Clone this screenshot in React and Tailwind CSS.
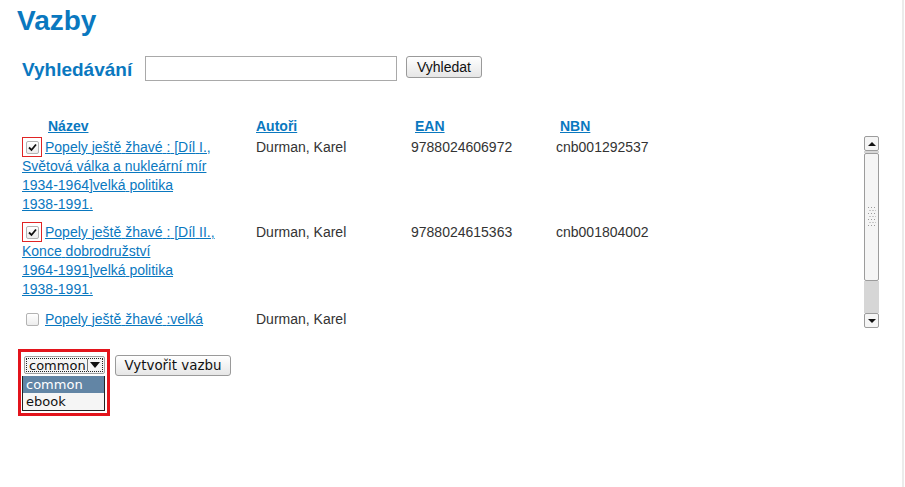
import React from 'react';

const books = [
  {
    id: 1,
    title: 'Popely ještě žhavé : [Díl I., Světová válka a nukleární mír 1934-1964]velká politika 1938-1991.',
    author: 'Durman, Karel',
    ean: '9788024606972',
    nbn: 'cnb001292537',
    checked: true,
  },
  {
    id: 2,
    title: 'Popely ještě žhavé : [Díl II., Konce dobrodružství 1964-1991]velká politika 1938-1991.',
    author: 'Durman, Karel',
    ean: '9788024615363',
    nbn: 'cnb001804002',
    checked: true,
  },
  {
    id: 3,
    title: 'Popely ještě žhavé :velká politika 1938-1991.',
    author: 'Durman, Karel',
    ean: '',
    nbn: '',
    checked: false,
  },
];

const Title = ({ text }) => (
  <>
    {text.split(' ').map((w, i) => (
      <React.Fragment key={i}>
        {i > 0 && ' '}
        {w.includes('-') ? <span className="whitespace-nowrap">{w}</span> : w}
      </React.Fragment>
    ))}
  </>
);

const CheckBox = ({ checked }) => (
  <span className="w-[13px] h-[13px] border border-[#b3b3b3] rounded-[2px] bg-gradient-to-b from-white to-[#ededed] flex items-center justify-center">
    {checked && (
      <svg width="11" height="11" viewBox="0 0 11 11">
        <path d="M2 5.5 L4.5 8 L9 2.5" fill="none" stroke="#111" strokeWidth="1.8" />
      </svg>
    )}
  </span>
);

const Arrow = ({ up }) => (
  <span
    className={
      up
        ? 'w-0 h-0 border-x-[4px] border-x-transparent border-b-[4px] border-b-[#111]'
        : 'w-0 h-0 border-x-[4px] border-x-transparent border-t-[4px] border-t-[#111]'
    }
  />
);

const ScrollBar = () => (
  <div className="w-[15px] flex flex-col">
    <div className="h-[15px] border border-[#9c9c9c] rounded-[2px] bg-[#f5f5f5] flex items-center justify-center">
      <Arrow up />
    </div>
    <div className="h-[2px] bg-[#d6d6d6]" />
    <div className="h-[128px] border border-[#9c9c9c] rounded-[2px] bg-[#f5f5f5] flex items-center justify-center">
      <svg width="8" height="20" viewBox="0 0 8 20">
        {[0, 1, 2, 3, 4, 5, 6].map((r) =>
          [0, 1, 2].map((c) => (
            <rect key={r + '-' + c} x={c * 3 + (r % 2) * 1.5} y={r * 3} width="1" height="1" fill="#9a9a9a" />
          ))
        )}
      </svg>
    </div>
    <div className="flex-1 bg-[#d6d6d6]" />
    <div className="h-[15px] border border-[#9c9c9c] rounded-[2px] bg-[#f5f5f5] flex items-center justify-center">
      <Arrow />
    </div>
  </div>
);

export default function App() {
  return (
    <div className="flex min-h-[487px] bg-white text-[#333] font-['Liberation_Sans',Arial,sans-serif]">
      <div className="flex-1 pl-[17px]">
        <h1 className="mt-[5px] text-[28px] leading-[32px] font-bold text-[#0a78bf]">Vazby</h1>

        {/* search */}
        <div className="mt-[19px] ml-[5px] flex items-start">
          <div className="w-[123px] pt-[1px] text-[19px] leading-[25px] font-bold text-[#0a78bf]">Vyhledávání</div>
          <input type="text" className="w-[252px] h-[25px] border border-[#a9a9a9] bg-white outline-none" />
          <button className="ml-[9px] w-[76px] h-[22px] border border-[#9a9a9a] rounded-[3px] bg-gradient-to-b from-white to-[#e6e6e6] text-[14px] text-[#111]">
            Vyhledat
          </button>
        </div>

        {/* table head */}
        <div className="mt-[35px] ml-[5px] grid grid-cols-[234px_155px_145px_1fr] text-[14px] leading-[19px] font-bold text-[#0a78bf]">
          <a href="#" className="pl-[26px] underline">Název</a>
          <a href="#" className="underline">Autoři</a>
          <a href="#" className="pl-[4px] underline">EAN</a>
          <a href="#" className="pl-[4px] underline">NBN</a>
        </div>

        {/* rows */}
        <div className="ml-[5px] flex h-[192px] w-[857px]">
          <div className="flex-1 overflow-hidden pt-[2px] text-[14px] leading-[19px]">
            {books.map((b, i) => (
              <div
                key={b.id}
                className={`grid grid-cols-[234px_155px_145px_1fr] ${i === 1 ? 'mt-[9px]' : i === 2 ? 'mt-[11px]' : ''}`}
              >
                <div className="w-[220px]">
                  {b.checked ? (
                    <span className="inline-flex align-top -mt-[1px] -mb-[1px] w-[20px] h-[20px] border border-[#e02424] items-center justify-center mr-[3px]">
                      <CheckBox checked />
                    </span>
                  ) : (
                    <span className="inline-flex align-top w-[20px] h-[19px] items-center justify-center mr-[3px] pl-[1px]">
                      <CheckBox />
                    </span>
                  )}
                  <a href="#" className="text-[#0a78bf] underline"><Title text={b.title} /></a>
                </div>
                <div>{b.author}</div>
                <div>{b.ean}</div>
                <div>{b.nbn}</div>
              </div>
            ))}
          </div>
          <ScrollBar />
        </div>

        {/* binding type */}
        <div className="mt-[21px] ml-[1px] flex items-start">
          <div className="w-[92px] h-[67px] border-[3px] border-[#e3141c]">
            <div className="ml-[3px] mt-[4px] w-[81px] h-[18px] border border-[#a0a0a0] rounded-[2px] bg-[#f5f5f5] p-[1px] flex font-['DejaVu_Sans',sans-serif] text-[13px] text-[#111]">
              <div className="flex-1 flex border border-dotted border-[#222]">
                <span className="pl-[2px] leading-[13px]">common</span>
                <span className="ml-auto w-[15px] border-l border-[#777] flex items-center justify-center">
                  <span className="w-0 h-0 border-x-[5px] border-x-transparent border-t-[6px] border-t-[#111]" />
                </span>
              </div>
            </div>
            <div className="ml-[1px] mt-[2px] w-[83px] border border-t-0 border-[#222] bg-[#f5f5f5] font-['DejaVu_Sans',sans-serif] text-[13px] leading-[17px] text-[#111]">
              <div className="bg-[#6285a5] text-white pl-[3px]">common</div>
              <div className="pl-[3px]">ebook</div>
            </div>
          </div>
          <button className="ml-[5px] mt-[6px] w-[116px] h-[21px] border border-[#9a9a9a] rounded-[3px] bg-gradient-to-b from-white to-[#e6e6e6] font-['DejaVu_Sans',sans-serif] text-[13.4px] leading-[19px] text-[#111]">
            Vytvořit vazbu
          </button>
        </div>
      </div>
      <div className="w-[2px] bg-[#ebebeb]" />
      <div className="w-[1px]" />
    </div>
  );
}
